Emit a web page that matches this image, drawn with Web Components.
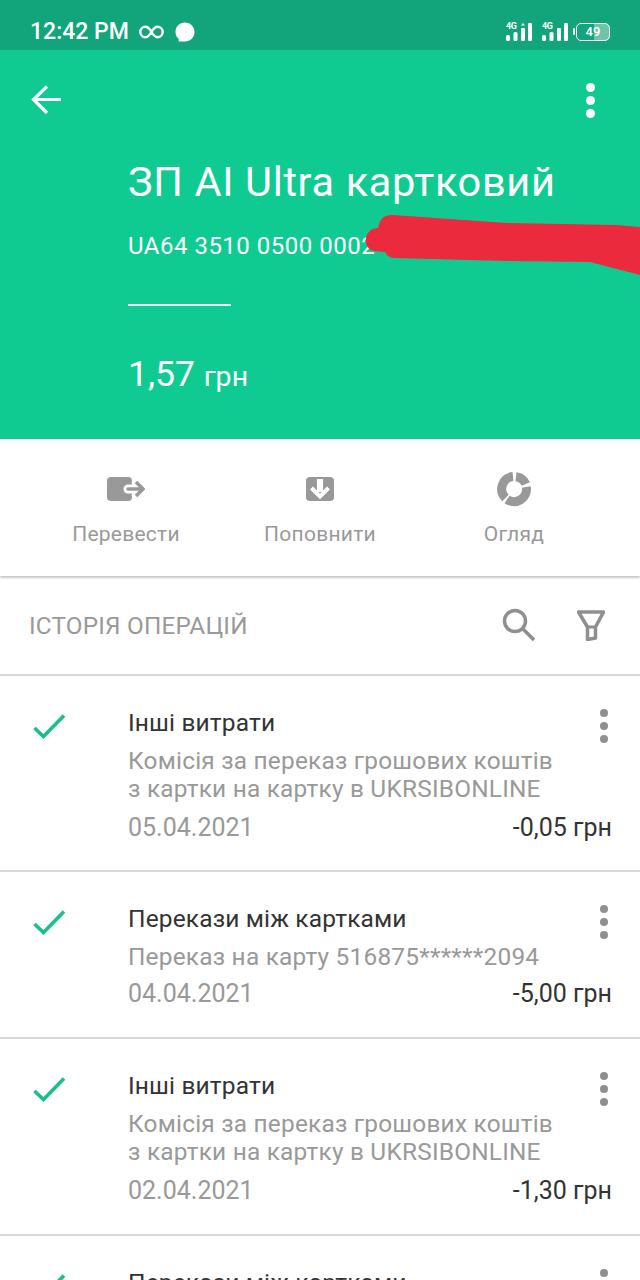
<!DOCTYPE html>
<html lang="uk">
<head>
<meta charset="UTF-8">
<title>Рахунок</title>
<style>
  html, body { margin: 0; padding: 0; background: #fff; }
  body { width: 640px; height: 1280px; overflow: hidden; font-family: Roboto, "Noto Sans", sans-serif; }
</style>
</head>
<body>
<status-bar></status-bar>
<account-header
  title="ЗП AI Ultra картковий"
  iban="UA64 3510 0500 0002"
  amount="1,57"></account-header>
<action-bar>
  <action-item label="Перевести">
    <svg width="38" height="24" viewBox="0 0 38 24"><rect width="25" height="24" rx="4" fill="#999"/><path fill="none" stroke="#fff" stroke-width="9" stroke-linecap="round" d="M21 12h11"/><path fill="none" stroke="#fff" stroke-width="8" d="M27 3l9 9-9 9"/><path fill="none" stroke="#999" stroke-width="3.500" stroke-linecap="round" d="M21 12h14"/><path fill="none" stroke="#999" stroke-width="3.500" d="M29 5l7 7-7 7"/></svg>
  </action-item>
  <action-item label="Поповнити">
    <svg width="28" height="24" viewBox="0 0 28 24"><rect width="28" height="24" rx="4" fill="#999"/><path fill="none" stroke="#fff" stroke-width="6" d="M14 2v13"/><path fill="none" stroke="#fff" stroke-width="4" d="M5.500 11 14 19.500 22.500 11"/></svg>
  </action-item>
  <action-item label="Огляд">
    <svg width="36" height="36" viewBox="0 0 36 36"><g fill="none" stroke="#999" stroke-width="9"><path d="M20 5.700A12.500 12.500 0 0 1 29.800 13"/><path d="M30.300 16A12.500 12.500 0 0 1 11 28.500"/><path d="M9.500 27A12.500 12.500 0 0 1 17 5.600"/></g></svg>
  </action-item>
</action-bar>
<history-head></history-head>
<op-row style="--h:194px;--foot:9px" title="Інші витрати" date="05.04.2021" sum="-0,05 грн">Комісія за переказ грошових коштів<br>з картки на картку в UKRSIBONLINE</op-row>
<op-row style="--h:165px;--foot:7px" title="Перекази між картками" date="04.04.2021" sum="-5,00 грн">Переказ на карту 516875******2094</op-row>
<op-row style="--h:195px;--foot:9px" title="Інші витрати" date="02.04.2021" sum="-1,30 грн">Комісія за переказ грошових коштів<br>з картки на картку в UKRSIBONLINE</op-row>
<op-row style="--h:44px;--foot:7px" title="Перекази між картками"></op-row>

<script>
  function shadow(el, html) {
    el.attachShadow({ mode: "open" }).innerHTML = html;
  }

  const netIcon = (arrow) => `
    <span class="net"><small>4G</small><svg width="26" height="18" viewBox="0 0 26 18"><g fill="#fff"><rect x="0" y="12" width="4" height="6" rx="1.500"/><rect x="7.500" y="9" width="4" height="9" rx="1.500"/><rect x="15" y="5" width="4" height="13" rx="1"/><rect x="22" y="0" width="4" height="18" rx="1"/>${arrow ? '<path d="M17 0l2 2.500h-4z"/>' : ""}</g></svg></span>`;

  class StatusBar extends HTMLElement {
    connectedCallback() {
      shadow(this, `
        <style>
          :host { display: flex; align-items: center; height: 50px; box-sizing: border-box; padding: 14px 30px 0 30px; background: #12a47a; color: #fff; }
          .time { font-size: 23px; line-height: 30px; font-weight: 500; }
          .inf { margin-left: 10px; display: block; }
          .bubble { margin-left: 11px; display: block; }
          .right { margin-left: auto; display: flex; align-items: center; }
          .net { position: relative; display: block; width: 26px; height: 18px; margin-right: 10px; }
          .net svg { display: block; }
          .net + .bat { margin-left: -2px; }
          .net small { position: absolute; left: 0; top: -1px; font-size: 9px; line-height: 9px; font-weight: 700; letter-spacing: -.3px; }
          .bat { position: relative; box-sizing: border-box; width: 34px; height: 18px; border: 1.500px solid #fff; border-radius: 5px; font-size: 13px; font-weight: 500; line-height: 15px; text-align: center; background: linear-gradient(90deg, transparent 17px, #6fc4a8 17px); }
          .bat::before { content: ""; position: absolute; left: -4px; top: 4px; width: 2px; height: 7px; background: #fff; border-radius: 1px; }
        </style>
        <span class="time">12:42 PM</span>
        <svg class="inf" width="25" height="14" viewBox="0 0 25 14"><path fill="none" stroke="#fff" stroke-width="2.500" d="M12.500 7C10.500 3.500 9 1.800 6.500 1.800a5.200 5.200 0 0 0 0 10.400C9 12.200 10.500 10.500 12.500 7s3.500-5.200 6-5.200a5.200 5.200 0 0 1 0 10.400C16 12.200 14.500 10.500 12.500 7z"/></svg>
        <svg class="bubble" width="20" height="20" viewBox="0 0 20 20"><path fill="#fff" d="M10 0.500c5.300 0 9.500 4 9.500 9.500s-4.200 9.500-9.500 9.500H3.500l.3-2.500C1.600 15.300 0.500 12.800 0.500 10 0.500 4.500 4.700 0.500 10 0.500z"/></svg>
        <div class="right">
          ${netIcon(true)}
          ${netIcon(false)}
          <span class="bat">49</span>
        </div>`);
    }
  }

  class KebabMenu extends HTMLElement {
    connectedCallback() {
      shadow(this, `
        <style>
          :host { display: flex; flex-direction: column; gap: var(--gap, 5px); }
          i { display: block; width: var(--dot, 8px); height: var(--dot, 8px); border-radius: 50%; background: var(--c, #8f8f8f); }
        </style>
        <i></i><i></i><i></i>`);
    }
  }

  class AccountHeader extends HTMLElement {
    connectedCallback() {
      shadow(this, `
        <style>
          :host { display: block; position: relative; height: 389px; box-sizing: border-box; background: #0fcb92; color: #fff; overflow: hidden; }
          .top { display: flex; justify-content: space-between; align-items: center; padding: 29px 45px 0 31px; height: 42px; }
          .body { padding: 0 0 0 128px; }
          h1 { margin: 35px 0 0; font-size: 41.500px; line-height: 52px; font-weight: 400; white-space: nowrap; letter-spacing: .65px; }
          .iban { margin-top: 23px; font-size: 24px; line-height: 30px; letter-spacing: .5px; white-space: nowrap; }
          .rule { margin-top: 43px; width: 103px; height: 2px; background: #fff; opacity: .9; }
          .amount { margin-top: 46px; font-size: 35.500px; line-height: 44px; }
          .amount span { font-size: 28.500px; }
          .scribble { position: absolute; left: 364px; top: 164px; display: block; }
          kebab-menu { --c: #fff; --dot: 9px; --gap: 4px; }
        </style>
        <div class="top">
          <svg width="32" height="30" viewBox="0 0 32 30"><path fill="none" stroke="#fff" stroke-width="3.200" d="M30 14.500H3M16 1.500 2.500 14.500 16 28"/></svg>
          <kebab-menu></kebab-menu>
        </div>
        <div class="body">
          <h1>${this.getAttribute("title")}</h1>
          <div class="iban">${this.getAttribute("iban")}</div>
          <div class="rule"></div>
          <div class="amount">${this.getAttribute("amount")} <span>грн</span></div>
        </div>
        <svg class="scribble" width="276" height="62" viewBox="0 0 276 62"><path fill="#ec2a3e" d="M276 13 253 11 143 9 29 1C24 1 20 2 18 5 15 8 15 11 14 14 8 14 3 18 2 24 1 30 4 36 10 37L21 38C23 42 26 44 31 44L143 47 226 48 276 61z"/></svg>`);
    }
  }

  class ActionBar extends HTMLElement {
    connectedCallback() {
      shadow(this, `
        <style>
          :host { display: grid; grid-template-columns: 252px 136px 252px; height: 137px; background: #fff; box-shadow: 0 2px 2px rgba(0,0,0,.22); position: relative; }
        </style>
        <slot></slot>`);
    }
  }

  class ActionItem extends HTMLElement {
    connectedCallback() {
      shadow(this, `
        <style>
          :host { display: flex; flex-direction: column; align-items: center; color: #999; font-size: 21px; }
          .icon { height: 36px; margin-top: 32px; display: flex; align-items: center; }
          .label { margin-top: 13px; line-height: 28px; letter-spacing: .25px; }
        </style>
        <div class="icon"><slot></slot></div>
        <div class="label">${this.getAttribute("label")}</div>`);
    }
  }

  class HistoryHead extends HTMLElement {
    connectedCallback() {
      shadow(this, `
        <style>
          :host { display: flex; align-items: center; height: 100px; box-sizing: border-box; padding: 0 35px 0 29px; background: #fff; border-bottom: 2px solid #d5d5d5; }
          .t { font-size: 24.300px; color: #999; letter-spacing: .2px; margin-right: auto; }
          .s { margin-right: 41px; display: block; }
          svg { display: block; }
        </style>
        <span class="t">ІСТОРІЯ ОПЕРАЦІЙ</span>
        <svg class="s" width="34" height="34" viewBox="0 0 34 34"><g fill="none" stroke="#8f8f8f" stroke-width="3.500"><circle cx="13" cy="13" r="10.500"/><path d="M20.500 20.500 32 32"/></g></svg>
        <svg width="28" height="31" viewBox="0 0 28 31"><path fill="none" stroke="#8f8f8f" stroke-width="3.500" stroke-linejoin="round" d="M1.500 2h25L18.500 17v11l-8 1.500V17z"/><path stroke="#8f8f8f" stroke-width="3" d="M10 17h9"/></svg>`);
    }
  }

  class OpRow extends HTMLElement {
    connectedCallback() {
      const date = this.getAttribute("date");
      const foot = date ? `<div class="foot"><span class="date">${date}</span><span class="sum">${this.getAttribute("sum")}</span></div>` : "";
      shadow(this, `
        <style>
          :host { display: grid; grid-template-columns: 128px 1fr 28px; height: var(--h); padding-right: 28px; background: #fff; border-bottom: 2px solid #d8d8d8; overflow: hidden; }
          .check { padding: 38px 0 0 33px; }
          .check svg { display: block; }
          .main { padding-top: 31px; min-width: 0; }
          .title { font-size: 24.500px; line-height: 32px; color: #333; white-space: nowrap; letter-spacing: .15px; }
          .desc { margin-top: 8px; font-size: 24.400px; line-height: 28px; color: #999; white-space: nowrap; letter-spacing: .22px; }
          .foot { display: flex; justify-content: space-between; align-items: baseline; margin-right: -28px; margin-top: var(--foot); line-height: 32px; }
          .date { font-size: 25px; color: #999; }
          .sum { font-size: 25px; color: #333; }
          kebab-menu { margin: 33px 0 0 16px; align-self: start; width: 8px; }
        </style>
        <div class="check"><svg width="33" height="25" viewBox="0 0 33 25"><path fill="none" stroke="#17c08d" stroke-width="3.600" d="M1.500 14 10.500 22.500 31 1.500"/></svg></div>
        <div class="main">
          <div class="title">${this.getAttribute("title")}</div>
          <div class="desc"><slot></slot></div>
          ${foot}
        </div>
        <kebab-menu></kebab-menu>`);
    }
  }

  customElements.define("kebab-menu", KebabMenu);
  customElements.define("status-bar", StatusBar);
  customElements.define("account-header", AccountHeader);
  customElements.define("action-bar", ActionBar);
  customElements.define("action-item", ActionItem);
  customElements.define("history-head", HistoryHead);
  customElements.define("op-row", OpRow);
</script>
</body>
</html>
